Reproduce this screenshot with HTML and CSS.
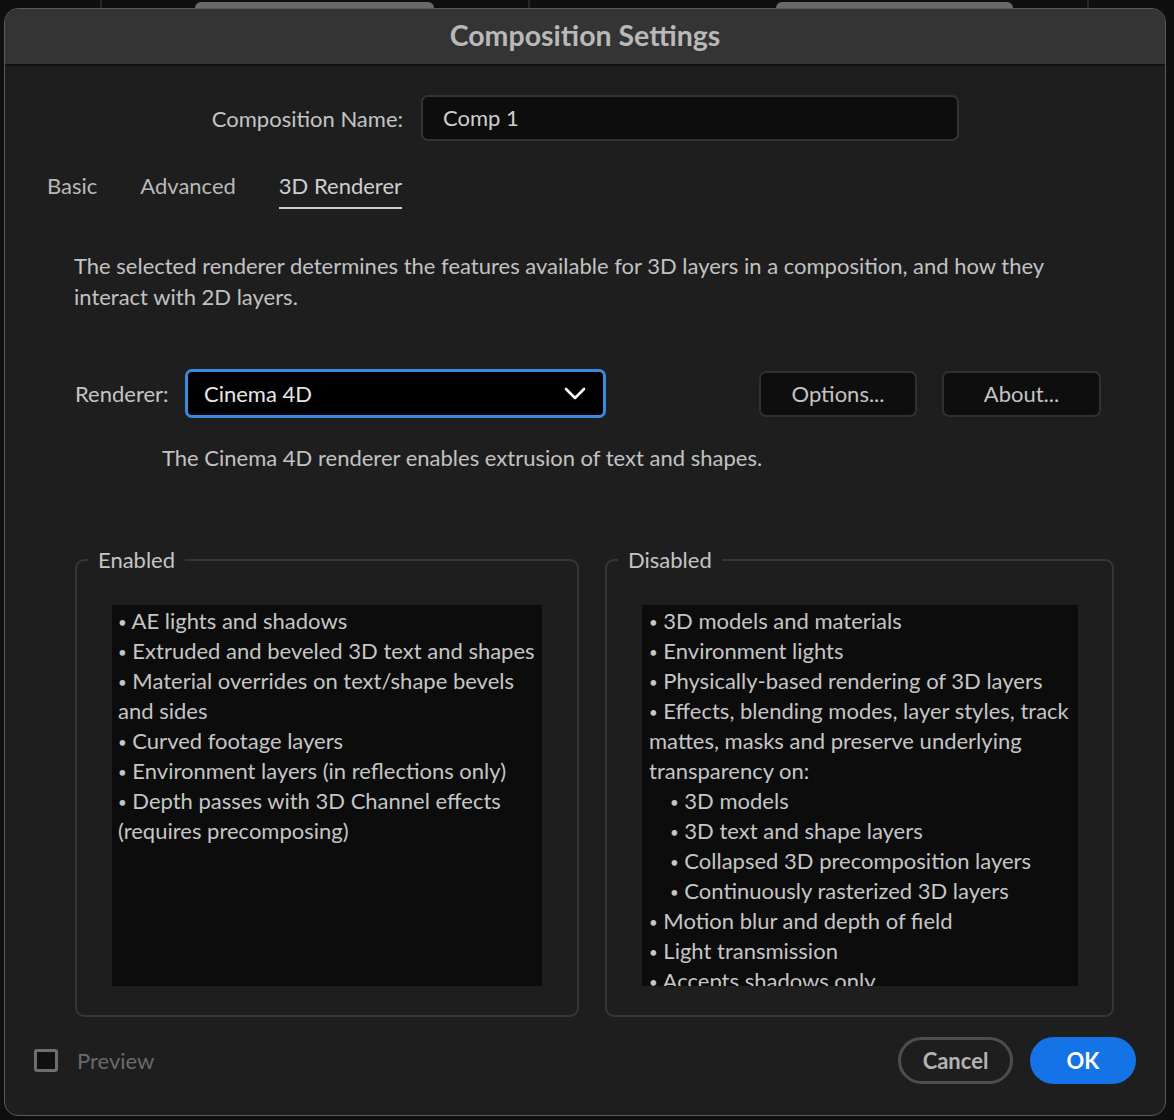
FILE: index.html
```html
<!DOCTYPE html>
<html lang="en">
<head>
<meta charset="utf-8">
<title>Composition Settings</title>
<link rel="stylesheet" href="styles.css">
</head>
<body>
<div class="backdrop">
  <div class="bg-tab bg-tab-a"></div>
  <div class="bg-tab bg-tab-b"></div>
  <div class="bg-rule bg-rule-a"></div>
  <div class="bg-rule bg-rule-b"></div>
  <div class="bg-rule bg-rule-c"></div>
</div>
<div class="dialog">
  <div class="titlebar">Composition Settings</div>
  <div class="body">
    <div class="name-row">
      <label class="name-label">Composition Name:</label>
      <div class="name-input">Comp 1</div>
    </div>
    <div class="tabs">
      <div class="tab">Basic</div>
      <div class="tab">Advanced</div>
      <div class="tab active">3D Renderer</div>
    </div>
    <p class="desc">The selected renderer determines the features available for 3D layers in a composition, and how they<br>interact with 2D layers.</p>
    <div class="renderer-row">
      <span class="renderer-label">Renderer:</span>
      <div class="select">
        <span>Cinema 4D</span>
        <svg class="chevron" width="22" height="14" viewBox="0 0 22 14"><polyline points="2,2 11,11 20,2" fill="none" stroke="#fff" stroke-width="2.6" stroke-linecap="round" stroke-linejoin="round"/></svg>
      </div>
      <div class="btn btn-options">Options...</div>
      <div class="btn btn-about">About...</div>
    </div>
    <p class="note">The Cinema 4D renderer enables extrusion of text and shapes.</p>
    <div class="groups">
      <fieldset class="group group-enabled">
        <legend>Enabled</legend>
        <div class="list">
          <div><span class="b">•</span> AE lights and shadows</div>
          <div><span class="b">•</span> Extruded and beveled 3D text and shapes</div>
          <div><span class="b">•</span> Material overrides on text/shape bevels<br>and sides</div>
          <div><span class="b">•</span> Curved footage layers</div>
          <div><span class="b">•</span> Environment layers (in reflections only)</div>
          <div><span class="b">•</span> Depth passes with 3D Channel effects<br>(requires precomposing)</div>
        </div>
      </fieldset>
      <fieldset class="group group-disabled">
        <legend>Disabled</legend>
        <div class="list">
          <div><span class="b">•</span> 3D models and materials</div>
          <div><span class="b">•</span> Environment lights</div>
          <div><span class="b">•</span> Physically-based rendering of 3D layers</div>
          <div><span class="b">•</span> Effects, blending modes, layer styles, track<br>mattes, masks and preserve underlying<br>transparency on:</div>
          <div class="sub"><span class="b">•</span> 3D models</div>
          <div class="sub"><span class="b">•</span> 3D text and shape layers</div>
          <div class="sub"><span class="b">•</span> Collapsed 3D precomposition layers</div>
          <div class="sub"><span class="b">•</span> Continuously rasterized 3D layers</div>
          <div><span class="b">•</span> Motion blur and depth of field</div>
          <div><span class="b">•</span> Light transmission</div>
          <div><span class="b">•</span> Accepts shadows only</div>
        </div>
      </fieldset>
    </div>
    <div class="footer">
      <div class="preview">
        <span class="checkbox"></span>
        <span class="preview-label">Preview</span>
      </div>
      <div class="actions">
        <div class="pill pill-cancel">Cancel</div>
        <div class="pill pill-ok">OK</div>
      </div>
    </div>
  </div>
</div>
</body>
</html>
```
FILE: styles.css
```css
* { box-sizing: border-box; }
html, body { margin: 0; padding: 0; }
body {
  background: #0f0f0f;
  width: 1174px;
  height: 1120px;
  overflow: hidden;
  position: relative;
  font-family: "Lato", "Liberation Sans", sans-serif;
  color: #c4c4c4;
}
.backdrop { position: absolute; inset: 0; z-index: 0; }
.bg-tab {
  position: absolute;
  top: 2px;
  height: 20px;
  background: #6a6a6a;
  border-radius: 6px;
}
.bg-tab-a { left: 195px; width: 239px; }
.bg-tab-b { left: 776px; width: 237px; }
.bg-rule { position: absolute; top: 0; height: 10px; width: 2px; background: #262626; }
.bg-rule-a { left: 100px; }
.bg-rule-b { left: 528px; }
.bg-rule-c { left: 1087px; }

.dialog {
  position: relative;
  z-index: 1;
  margin: 8px 0 0 4px;
  width: 1162px;
  height: 1108px;
  background: #1e1e1e;
  border: 1px solid #5a5a5a;
  border-radius: 14px;
  overflow: hidden;
}
.titlebar {
  height: 57px;
  background: #343434;
  border-bottom: 2px solid #121212;
  text-align: center;
  font-weight: 700;
  font-size: 28.5px;
  line-height: 52px;
  color: #b9b9b9;
}
.body { display: flex; flex-direction: column; }

.name-row { display: flex; align-items: center; gap: 18px; margin-top: 29px; }
.name-label { width: 398px; text-align: right; font-size: 22px; color: #c4c4c4; }
.name-input {
  width: 538px;
  height: 46px;
  background: #0d0d0d;
  border: 2px solid #333;
  border-radius: 7px;
  padding-left: 20px;
  font-size: 22px;
  line-height: 42px;
  color: #cfcfcf;
}

.tabs { display: flex; gap: 43px; margin-top: 31px; padding-left: 42px; }
.tab {
  font-size: 22px;
  line-height: 28px;
  padding-bottom: 7px;
  border-bottom: 2px solid transparent;
  color: #b9b9b9;
}
.tab.active { border-bottom-color: #d0d0d0; color: #cfcfcf; }

.desc {
  margin: 41px 0 0 0;
  padding-left: 69px;
  font-size: 22px;
  line-height: 31px;
  color: #c2c2c2;
}

.renderer-row { display: flex; align-items: center; margin-top: 57px; padding-left: 70px; }
.renderer-label { width: 110px; font-size: 22px; color: #c4c4c4; }
.select {
  width: 421px;
  height: 49px;
  border: 3px solid #3b8ae0;
  border-radius: 7px;
  background: #000;
  display: flex;
  align-items: center;
  justify-content: space-between;
  padding: 0 17px 0 16px;
  font-size: 22px;
  color: #e6e6e6;
}
.chevron { display: block; }
.btn {
  height: 46px;
  background: #0e0e0e;
  border: 2px solid #303030;
  border-radius: 7px;
  display: flex;
  align-items: center;
  justify-content: center;
  font-size: 22px;
  color: #c4c4c4;
}
.btn-options { width: 158px; margin-left: 153px; }
.btn-about { width: 159px; margin-left: 25px; }

.note {
  margin: 25px 0 0 0;
  padding-left: 157px;
  font-size: 22px;
  line-height: 30px;
  color: #c2c2c2;
}

.groups { display: flex; gap: 26px; margin-top: 73px; padding-left: 70px; }
.group {
  margin: 0;
  padding: 0;
  height: 471px;
  border: 2px solid #363636;
  border-radius: 9px;
  min-width: 0;
}
.group-enabled { width: 504px; }
.group-disabled { width: 509px; }
.group legend {
  margin-left: 11px;
  padding: 0 10px;
  font-size: 22px;
  line-height: 28px;
  color: #c4c4c4;
}
.list {
  margin: 31px 0 0 35px;
  height: 381px;
  background: #0c0c0c;
  padding: 1px 0 0 6px;
  overflow: hidden;
  font-size: 22px;
  line-height: 30px;
  color: #c6c6c6;
  white-space: nowrap;
}
.list .b { font-size: 15px; line-height: 0; vertical-align: 1px; }
.group-enabled .list { width: 430px; }
.group-disabled .list { width: 436px; padding-left: 7px; }
.list .sub { padding-left: 21px; }

.footer {
  display: flex;
  align-items: center;
  justify-content: space-between;
  margin-top: 20px;
  padding: 0 29px;
}
.preview { display: flex; align-items: center; gap: 19px; }
.checkbox {
  width: 24px;
  height: 23px;
  border: 3px solid #6e6e6e;
  border-radius: 3px;
  background: #111;
}
.preview-label { font-size: 22px; color: #6a6a6a; }
.actions { display: flex; gap: 17px; }
.pill {
  height: 47px;
  border-radius: 24px;
  display: flex;
  align-items: center;
  justify-content: center;
  font-weight: 700;
  font-size: 22px;
}
.pill-cancel { width: 115px; border: 3px solid #4e4e4e; color: #b3b3b3; }
.pill-ok { width: 106px; background: #1473e6; color: #fff; }
```
